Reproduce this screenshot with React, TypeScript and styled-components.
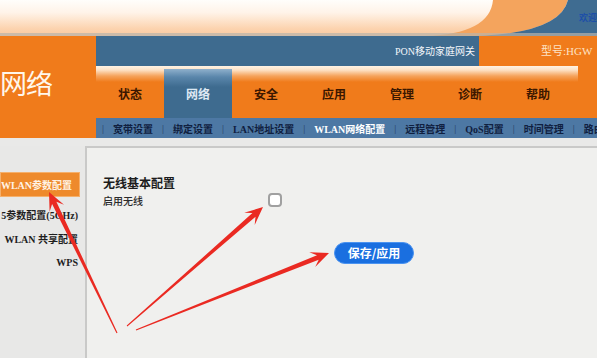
import { Fragment } from "react";
import styled, { createGlobalStyle } from "styled-components";

const GlobalStyle = createGlobalStyle`
  html, body {
    margin: 0;
    padding: 0;
    background: #ffffff;
  }
  body {
    font-family: "Noto Sans CJK SC", "Noto Sans", sans-serif;
  }
`;

const serifCjk = `"Liberation Serif", "Noto Sans CJK SC", serif`;

const Page = styled.div`
  position: relative;
  width: 597px;
  height: 358px;
  overflow: hidden;
  background: #f0f0ee;
`;

const Banner = styled.div`
  position: relative;
  height: 36px;
  overflow: hidden;

  svg {
    display: block;
  }
`;

const Welcome = styled.span`
  position: absolute;
  right: 0;
  top: 11px;
  font-size: 9px;
  font-weight: 700;
  color: #1d4fa8;
  white-space: nowrap;
`;

const Header = styled.div`
  display: grid;
  grid-template-columns: 96px 1fr;
  grid-template-rows: 30px 52px 20px;
`;

const Brand = styled.div`
  grid-row: 1 / span 3;
  background: #f07b1b;
  display: flex;
  align-items: center;
  padding-bottom: 10px;
  font-size: 27px;
  color: #fff7ec;
  letter-spacing: -1px;
`;

const InfoBar = styled.div`
  display: flex;
`;

const Product = styled.div`
  flex: 1;
  background: #3e6b8f;
  color: #f4f7fb;
  font-family: ${serifCjk};
  font-size: 10px;
  display: flex;
  align-items: center;
  justify-content: flex-end;
  padding-right: 4px;
  padding-bottom: 2px;
`;

const Model = styled.div`
  width: 118px;
  background: #f07b1b;
  color: #fde3c6;
  font-family: ${serifCjk};
  font-size: 11px;
  display: flex;
  align-items: center;
  padding-left: 62px;
  padding-bottom: 2px;
  white-space: nowrap;
  overflow: hidden;
  box-sizing: border-box;
`;

const Menu = styled.div`
  display: flex;
  padding-top: 3px;
  background:
    linear-gradient(to bottom, #fff3e4 0, #fde2c6 4px, #f5a35c 10px, rgba(240, 123, 27, 0) 16px) 0 0 / 482px 16px no-repeat,
    #f07b1b;
`;

const Tab = styled.div<{ $active?: boolean }>`
  width: 68px;
  display: flex;
  align-items: center;
  justify-content: center;
  font-size: 12px;
  font-weight: 700;
  color: ${(p) => (p.$active ? "#dde8f3" : "#3b1700")};
  background: ${(p) =>
    p.$active ? "linear-gradient(to bottom, #8fb0cc 0, #5a86ab 8px, #3e6b8f 18px)" : "transparent"};
`;

const SubMenu = styled.div`
  background: #4d78a4;
  display: flex;
  align-items: center;
  gap: 9px;
  padding-left: 6px;
  white-space: nowrap;
  overflow: hidden;
  font-family: ${serifCjk};
  font-size: 10px;
  font-weight: 700;
`;

const SubItem = styled.span<{ $active?: boolean }>`
  color: ${(p) => (p.$active ? "#ffffff" : "#102040")};
`;

const Sep = styled.span`
  color: #263f63;
  font-weight: 400;
`;

const Divider = styled.div`
  height: 8px;
  background: #e9e9e8;
`;

const Body = styled.div`
  display: flex;
  height: 212px;
`;

const Sidebar = styled.div`
  width: 85px;
  background: #e8e8e7;
  padding-top: 26px;
  display: flex;
  flex-direction: column;
  box-sizing: border-box;
`;

const SideItem = styled.div<{ $active?: boolean }>`
  width: 80px;
  height: ${(p) => (p.$active ? "25px" : "24px")};
  margin-bottom: ${(p) => (p.$active ? "5px" : "0")};
  box-sizing: border-box;
  display: flex;
  align-items: center;
  justify-content: flex-end;
  padding-right: ${(p) => (p.$active ? "7px" : "2px")};
  white-space: nowrap;
  overflow: hidden;
  font-family: ${serifCjk};
  font-size: 10px;
  font-weight: 700;
  color: ${(p) => (p.$active ? "#fff3e6" : "#1e1e1e")};
  background: ${(p) => (p.$active ? "#ee8a2c" : "transparent")};
  border: ${(p) => (p.$active ? "1px solid #f5b06c" : "none")};
`;

const Panel = styled.div`
  flex: 1;
  background: #f0f0ee;
  border-left: 2px solid #c9c9c8;
  border-top: 2px solid #c9c9c8;
  padding: 28px 0 0 16px;
`;

const Title = styled.div`
  font-size: 12px;
  line-height: 14px;
  font-weight: 700;
  color: #1c1c1c;
`;

const FieldRow = styled.div`
  display: flex;
  align-items: center;
  height: 16px;
  margin-top: 2px;
`;

const Label = styled.span`
  width: 165px;
  font-size: 10px;
  color: #2a2a2a;
  font-weight: 500;
`;

const Check = styled.span`
  width: 14px;
  height: 14px;
  box-sizing: border-box;
  border: 2px solid #a0a0a0;
  border-radius: 4px;
  background: #ffffff;
`;

const SaveButton = styled.button`
  display: block;
  margin: 34px 0 0 231px;
  width: 80px;
  height: 22px;
  border: 1px solid #4b93f0;
  border-radius: 11px;
  background: #1a6fe0;
  color: #ffffff;
  font-family: "Noto Sans CJK SC", sans-serif;
  font-size: 12px;
  font-weight: 700;
  padding: 0;
  line-height: 20px;
`;

const Overlay = styled.svg`
  position: absolute;
  left: 0;
  top: 0;
  pointer-events: none;
`;

const tabs = ["状态", "网络", "安全", "应用", "管理", "诊断", "帮助"];
const subs = ["宽带设置", "绑定设置", "LAN地址设置", "WLAN网络配置", "远程管理", "QoS配置", "时间管理", "路由配置"];
const sideItems = ["WLAN参数配置", "5参数配置(5GHz)", "WLAN 共享配置", "WPS"];

// tail -> tip, annotations drawn over the page
const arrows: [number, number, number, number][] = [
  [117, 333, 49, 192],
  [127, 326, 263, 207],
  [136, 330, 329, 253],
];

function arrowPoints(x1: number, y1: number, x2: number, y2: number) {
  const dx = x2 - x1;
  const dy = y2 - y1;
  const len = Math.hypot(dx, dy);
  const ux = dx / len;
  const uy = dy / len;
  const px = -uy;
  const py = ux;
  const head = 18;
  const neck = 12;
  const wing = 8;
  const shaft = 2.4;
  const tail = 0.5;
  const nx = x2 - ux * neck;
  const ny = y2 - uy * neck;
  const wx = x2 - ux * head;
  const wy = y2 - uy * head;
  const pts = [
    [x1 + px * tail, y1 + py * tail],
    [nx + px * shaft, ny + py * shaft],
    [wx + px * wing, wy + py * wing],
    [x2, y2],
    [wx - px * wing, wy - py * wing],
    [nx - px * shaft, ny - py * shaft],
    [x1 - px * tail, y1 - py * tail],
  ];
  return pts.map((p) => p.map((v) => v.toFixed(1)).join(",")).join(" ");
}

function App() {
  return (
    <>
      <GlobalStyle />
      <Page>
        <Banner>
          <svg width="597" height="36" viewBox="0 0 597 36">
            <defs>
              <linearGradient id="sky" x1="0" y1="0" x2="0" y2="1">
                <stop offset="0" stopColor="#fffefb" />
                <stop offset="0.35" stopColor="#fff3e8" />
                <stop offset="0.8" stopColor="#fcd3ae" />
                <stop offset="1" stopColor="#f7c9a2" />
              </linearGradient>
            </defs>
            <rect width="597" height="36" fill="url(#sky)" />
            <path d="M425,36 Q490,34 493,0 L568,0 Q560,33 476,36 Z" fill="#f4a45d" />
            <path d="M476,36 Q560,33 568,0 L597,0 L597,36 Z" fill="#3f6c91" />
            <rect y="33" width="597" height="3" fill="#b9b3ab" opacity="0.7" />
          </svg>
          <Welcome>欢迎</Welcome>
        </Banner>

        <Header>
          <Brand>网络</Brand>
          <InfoBar>
            <Product>PON移动家庭网关</Product>
            <Model>型号:HGW</Model>
          </InfoBar>
          <Menu>
            {tabs.map((t) => (
              <Tab key={t} $active={t === "网络"}>
                {t}
              </Tab>
            ))}
          </Menu>
          <SubMenu>
            {subs.map((s) => (
              <Fragment key={s}>
                <Sep>|</Sep>
                <SubItem $active={s === "WLAN网络配置"}>{s}</SubItem>
              </Fragment>
            ))}
          </SubMenu>
        </Header>

        <Divider />

        <Body>
          <Sidebar>
            {sideItems.map((s, i) => (
              <SideItem key={s} $active={i === 0}>
                {s}
              </SideItem>
            ))}
          </Sidebar>
          <Panel>
            <Title>无线基本配置</Title>
            <FieldRow>
              <Label>启用无线</Label>
              <Check />
            </FieldRow>
            <SaveButton>保存/应用</SaveButton>
          </Panel>
        </Body>

        <Overlay width="597" height="358" viewBox="0 0 597 358">
          {arrows.map(([x1, y1, x2, y2], i) => (
            <polygon key={i} points={arrowPoints(x1, y1, x2, y2)} fill="#ea2a22" />
          ))}
        </Overlay>
      </Page>
    </>
  );
}

export default App;
